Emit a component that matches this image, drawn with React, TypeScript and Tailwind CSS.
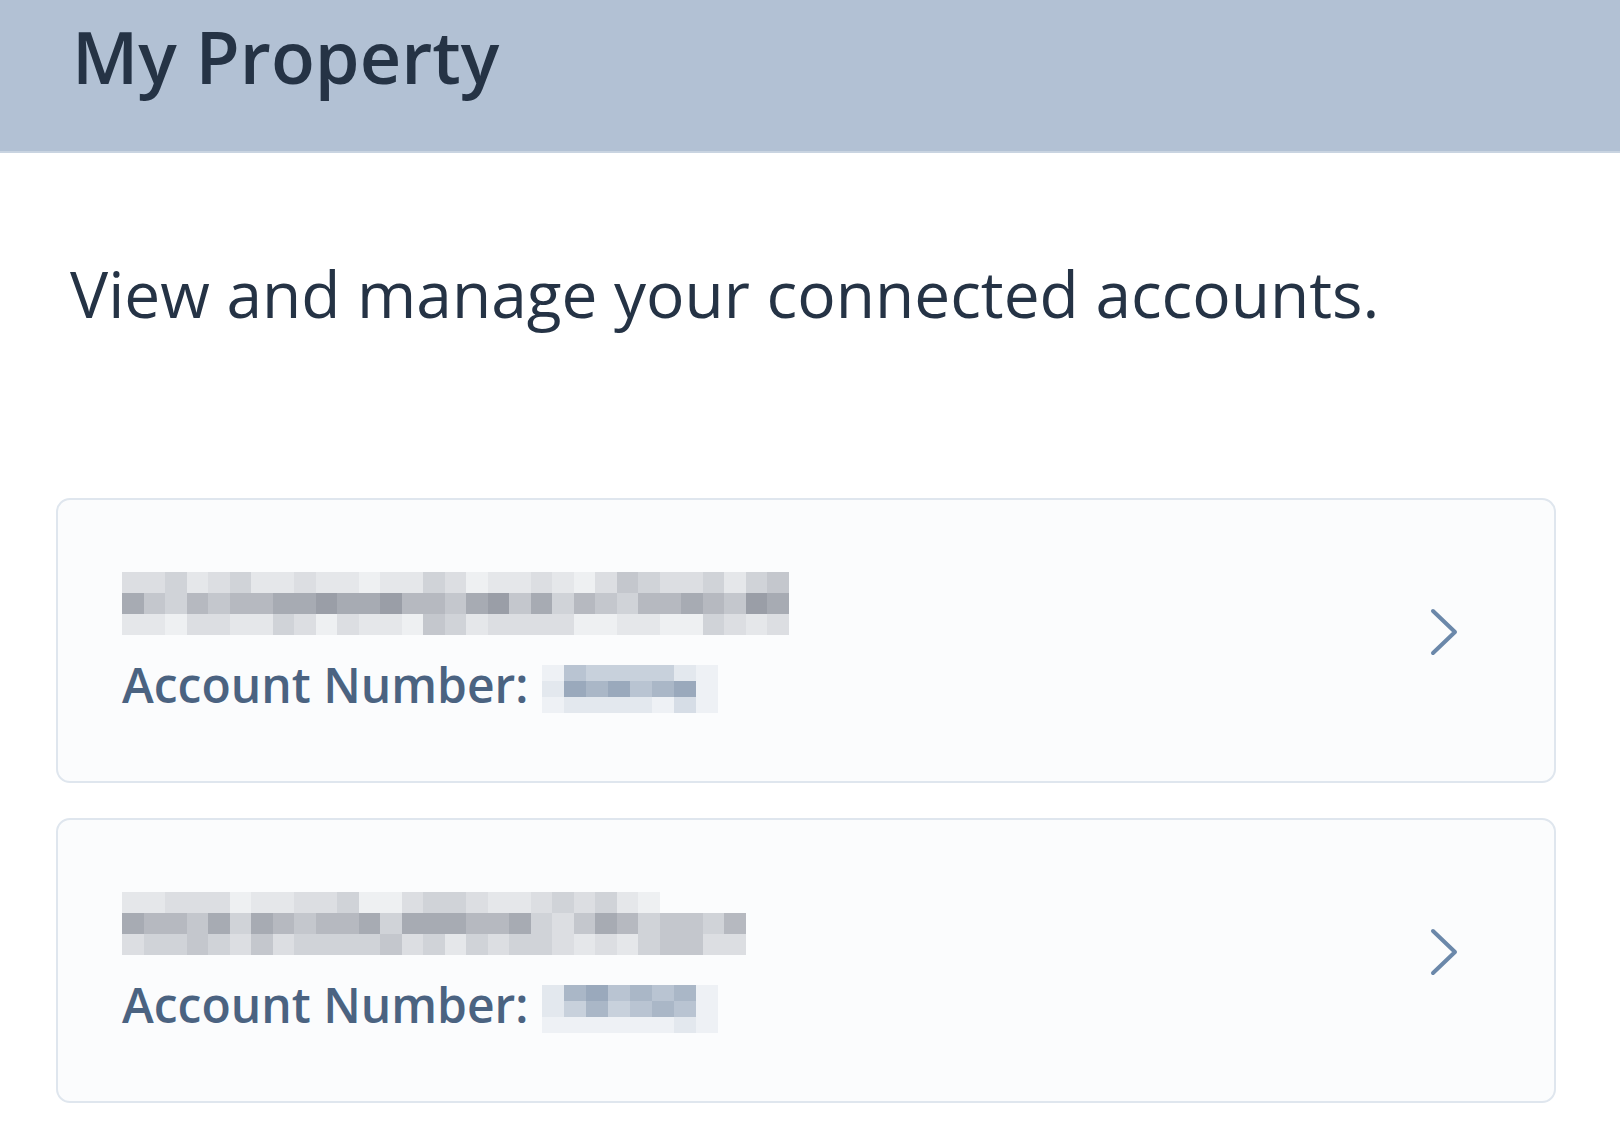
import React from 'react';

// shade levels per cell, each row of the pixelated (redacted) text
const shades = ['#fbfcfd', '#eef0f2', '#e5e7ea', '#dcdee2', '#d0d3d8', '#c4c7cd', '#b6b9c0', '#a7abb3', '#9a9ea7', '#8e929c'];
const blueShades = ['#fbfcfd', '#eef1f5', '#e3e8ee', '#d6dde6', '#c8d1dc', '#b9c4d2', '#aab7c7', '#9aa9bc'];

interface MosaicProps {
  rows: string[];
  palette: string[];
  w: number;
  h: number;
}

function Mosaic({ rows, palette, w, h }: MosaicProps) {
  return (
    <div className="flex flex-col">
      {rows.map((row, r) => (
        <div key={r} className="flex">
          {row.split('').map((c, i) => (
            <div key={i} style={{ width: w, height: h, backgroundColor: palette[Number(c)] }} />
          ))}
        </div>
      ))}
    </div>
  );
}

function Chevron() {
  return (
    <svg width="32" height="52" viewBox="0 0 32 52" fill="none" className="text-[#6b88aa]">
      <path d="M5 5 L27 26 L5 47" stroke="currentColor" strokeWidth="4" strokeLinecap="round" strokeLinejoin="round" />
    </svg>
  );
}

const accounts = [
  {
    name: [
      '3342342232212243122321354334245',
      '7546566778778665785746546676587',
      '2213322431322154233331122114323',
    ],
    number: ['15444421', '27675671', '12222131'],
  },
  {
    name: [
      '22333122334113443223434210000',
      '76657476566747776674357645546',
      '34454353444453424344323245533',
    ],
    number: ['26756561', '24645651', '11111121'],
  },
];

export default function App() {
  return (
    <div className="min-h-screen bg-white font-['Open_Sans',sans-serif] text-[#253345]">
      <div className="h-[153px] bg-[#b2c1d4] border-b-2 border-[#c9d4e1] px-[72px] pt-[13px]">
        <h1 className="text-[72px] font-semibold leading-[1.2]">My Property</h1>
      </div>

      <div className="px-[56px] pt-[103px]">
        <p className="pl-[14px] text-[64px] leading-[1.2]">View and manage your connected accounts.</p>

        <div className="mt-[165px] flex flex-col gap-[35px] w-[1500px]">
          {accounts.map((a, idx) => (
            <div
              key={idx}
              className="h-[285px] rounded-[14px] border-2 border-[#dfe6ee] bg-[#fbfcfd] flex items-center justify-between pl-[64px] pr-[94px]"
            >
              <div className="flex flex-col gap-[26px] self-start pt-[72px]">
                <Mosaic rows={a.name} palette={shades} w={21.5} h={21} />
                <div className="flex items-start gap-[14px]">
                  <span className="text-[48px] font-semibold text-[#4b6381] leading-none">Account Number:</span>
                  <div className="mt-[4px]">
                    <Mosaic rows={a.number} palette={blueShades} w={22} h={16} />
                  </div>
                </div>
              </div>
              <div className="-mt-[16px]">
                <Chevron />
              </div>
            </div>
          ))}
        </div>
      </div>
    </div>
  );
}
